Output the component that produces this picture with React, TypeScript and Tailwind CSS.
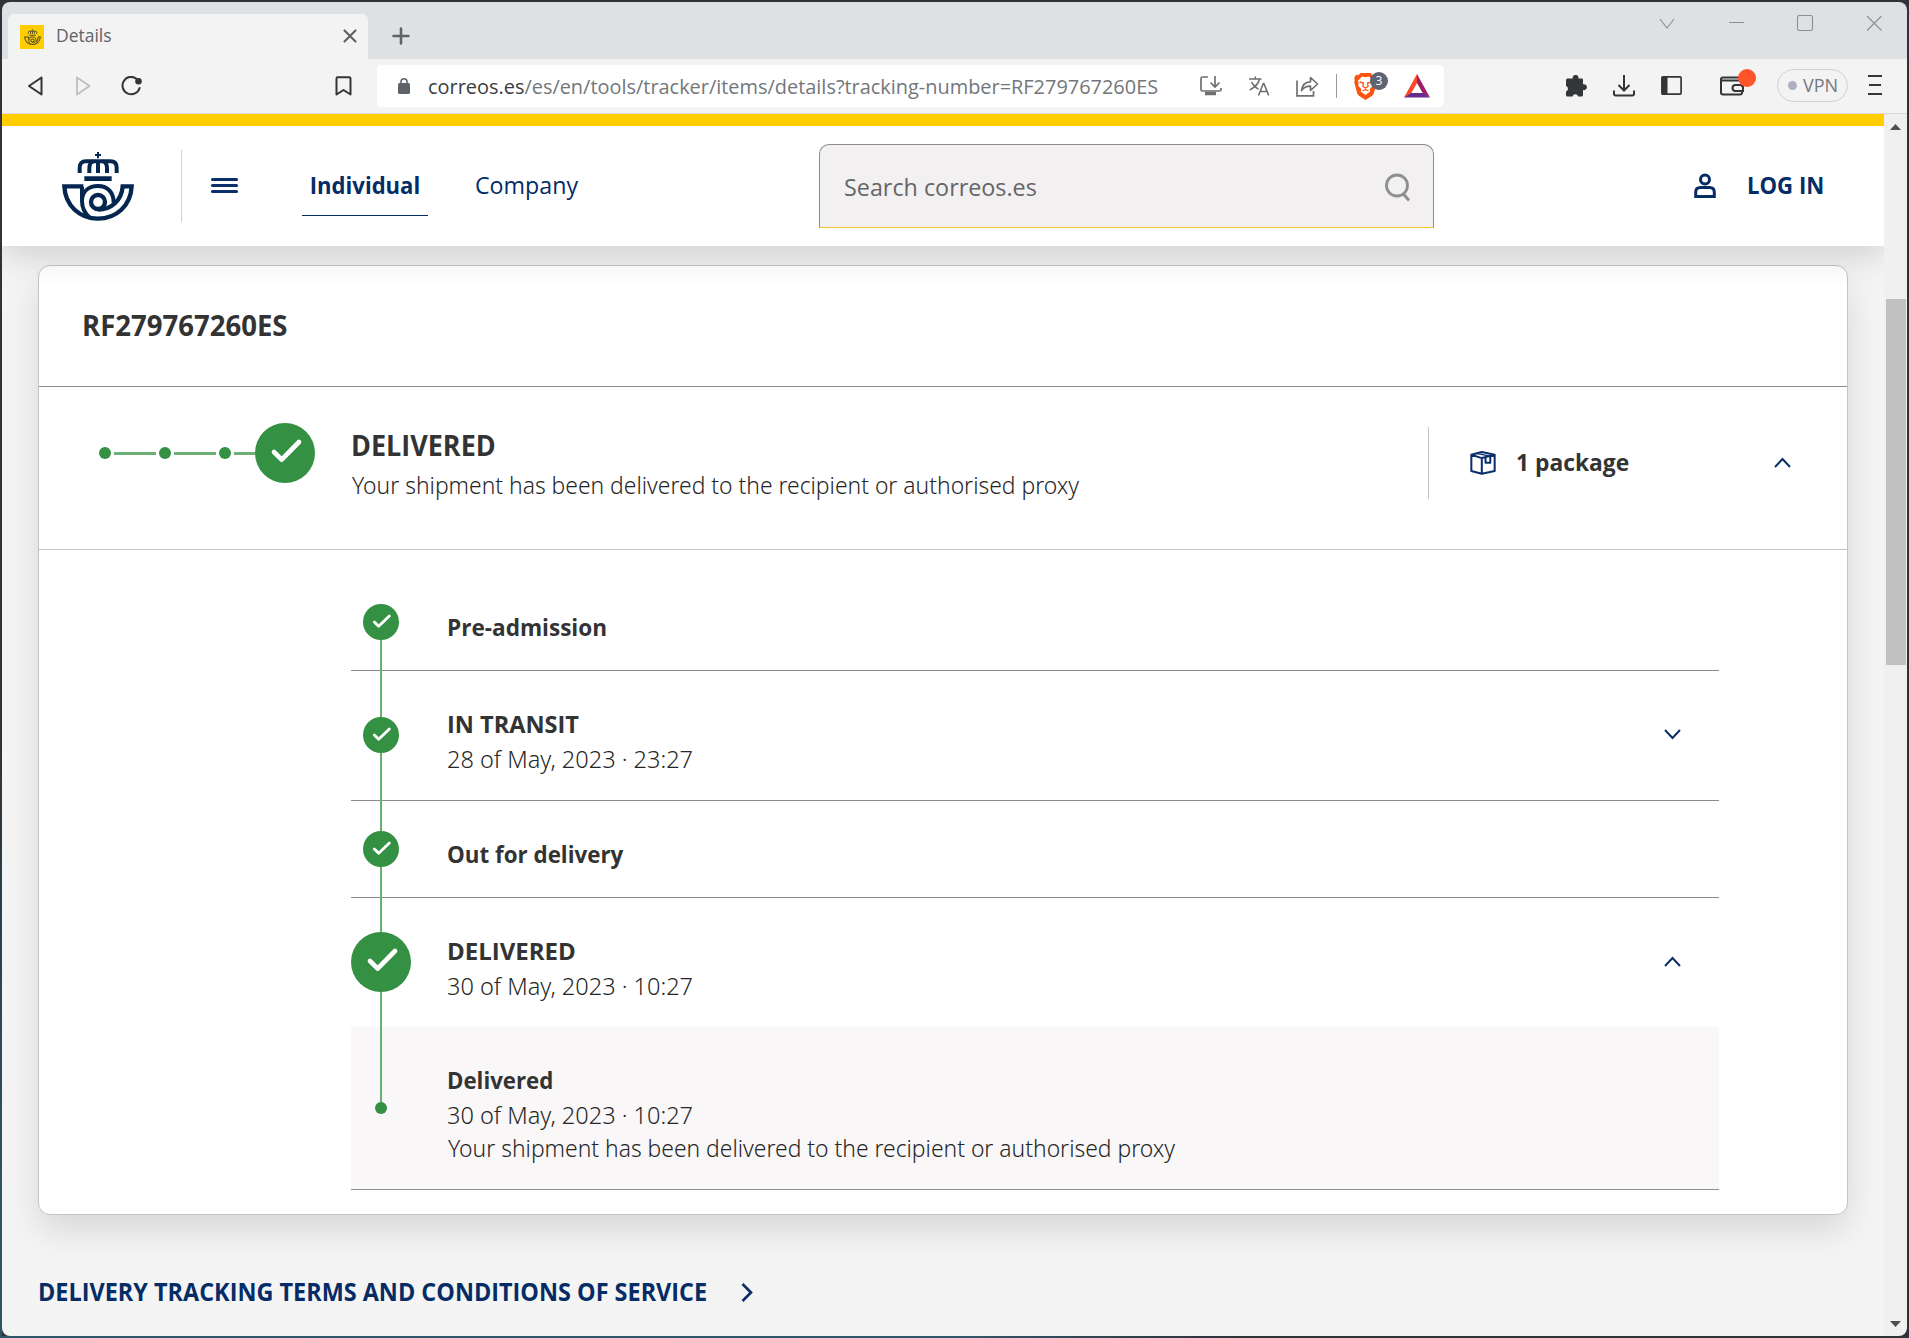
import type { ReactNode } from "react";

function CorreosLogo({ className }: { className?: string }) {
  return (
    <svg viewBox="186 456 216 207" className={className} fill="none" stroke="currentColor">
      <path d="M294 456v19M285 465h18" strokeWidth="6" />
      <path d="M239 519v-16c0-12 7-19 18-19h74c12 0 19 7 19 19v16" strokeWidth="12" />
      <path d="M268 519v-14c0-12 4-19 12-21M294 519v-36M321 519v-14c0-12-4-19-12-21" strokeWidth="12" />
      <path d="M253 536h82" strokeWidth="14" />
      <path d="M250 559h-57c3 58 46 97 101 97s98-39 101-97h-27c-3 42-34 70-74 70" strokeWidth="13" />
      <path d="M246 560v44c0 20 10 38 24 50M246 600c2-26 20-42 48-42 30 0 47 20 47 50" strokeWidth="12" />
      <circle cx="294" cy="606" r="21" strokeWidth="13" />
    </svg>
  );
}

function BigCheck({ className = "" }: { className?: string }) {
  return (
    <svg viewBox="0 0 180 180" className={`size-[60px] shrink-0 ${className}`}>
      <circle cx="90" cy="90" r="90" fill="#349042" />
      <path d="M57 87l23 23 52-53" fill="none" stroke="#fff" strokeWidth="14" strokeLinecap="round" strokeLinejoin="round" />
    </svg>
  );
}

function SmallCheck() {
  return (
    <svg viewBox="0 0 108 108" className="size-9 shrink-0">
      <circle cx="54" cy="54" r="54" fill="#349042" />
      <path d="M34 54l13 13 32-31" fill="none" stroke="#fff" strokeWidth="8.500" strokeLinecap="round" strokeLinejoin="round" />
    </svg>
  );
}

function Chevron({ dir, className = "" }: { dir: "up" | "down"; className?: string }) {
  return (
    <svg viewBox="0 0 17 11" className={`h-[11px] w-[17px] ${className}`} fill="none" stroke="#0a2f6b" strokeWidth="2">
      <path d={dir === "up" ? "M1 10l7.500-8 7.500 8" : "M1 1l7.500 8 7.500-8"} />
    </svg>
  );
}

function TabStrip() {
  return (
    <div className="flex h-[57px] bg-[#dee1e4] pl-1.5">
      <div className="mt-3 flex h-[45px] w-[360px] items-center rounded-t-md bg-[#f3f3f3] pr-3 pl-3">
        <span className="flex size-6 items-center justify-center bg-[#ffcd00] text-[#4d4a2c]">
          <CorreosLogo className="h-4 w-[17px]" />
        </span>
        <span className="mb-[3px] ml-3 origin-left scale-x-[0.97] text-[18px] leading-6 text-[#5f6368]">Details</span>
        <svg viewBox="0 0 12 12" className="mb-px ml-auto size-3 overflow-visible" stroke="#5f6368" strokeWidth="2.2" strokeLinecap="round">
          <path d="M.5.500l11 11M11.500.500l-11 11" />
        </svg>
      </div>
      <svg viewBox="0 0 18 18" className="mt-[25px] ml-6 size-[18px]" stroke="#5f6368" strokeWidth="2.600" strokeLinecap="round">
        <path d="M9 1.500v15M1.500 9h15" />
      </svg>
      <div className="ml-auto flex pt-[13px] pr-6">
        <svg viewBox="0 0 224 16" className="h-4 w-[224px]" fill="none" stroke="#8b8f93" strokeWidth="1.100">
          <path d="M1 4l7 9 7-9M70 7.500h15" />
          <rect x="138.500" y=".5" width="15" height="15" rx="2" />
          <path d="M208 1l14.500 14.500M222.500 1L208 15.500" />
        </svg>
      </div>
    </div>
  );
}

function AddressBar() {
  return (
    <div className="ml-[25px] flex h-[42px] w-[1067px] items-center rounded-[5px] bg-white">
      <svg viewBox="0 0 12 16" className="ml-[21px] h-4 w-3">
        <rect y="5" width="12" height="11" rx="1.500" fill="#5f6368" />
        <path d="M3 6V3.800a3 3 0 0 1 6 0V6" fill="none" stroke="#5f6368" strokeWidth="1.500" />
      </svg>
      <span className="mt-0.5 ml-[18px] w-[772px] origin-left scale-x-[0.996] text-[20px] leading-7 whitespace-nowrap text-[#73777b]">
        <span className="text-[#3a3c3f]">correos.es</span>/es/en/tools/tracker/items/details?tracking-number=RF279767260ES
      </span>
      <svg viewBox="0 0 22 20" className="h-5 w-[22px]" fill="none" stroke="#6f6f6f" strokeWidth="1.700">
        <path d="M8 1H2.500Q1 1 1 2.500v11Q1 15 2.500 15h17q1.500 0 1.500-1.500V12M15 0v10M10.500 6.500L15 11l4.500-4.500" />
        <path d="M5 17.500h11" strokeWidth="3.500" />
      </svg>
      <svg viewBox="0 0 20 20" className="ml-[27px] size-5" fill="none" stroke="#6f6f6f" strokeWidth="1.600">
        <path d="M0 3h12.500M6.300.500V3M2.500 6c1.500 3.200 4.200 5.600 7 7.200M10.500 3C9.500 7.500 6 11.200.800 14" />
        <path d="M9.500 19.500l4.800-12h.6l4.800 12M11.300 15.500h6.600" />
      </svg>
      <svg viewBox="0 0 23 21" className="ml-[27px] h-[21px] w-[23px]" fill="none" stroke="#6f6f6f" strokeWidth="1.700">
        <path d="M1 4.500V19.800h16.500V15" />
        <path d="M5.500 14.500C6 8.500 9.500 6 14.500 5.800V1.500l7 6.500-7 6.500v-4.300c-4-.2-6.500 1-9 4.300z" strokeLinejoin="round" />
      </svg>
      <span className="ml-[17px] h-6 w-px bg-[#9a9a9a]" />
      <div className="relative ml-[17px] flex">
        <svg viewBox="0 0 23 27" className="h-[27px] w-[23px]">
          <path d="M6.500 0h10l2.200 2.200 2.300-.4 1.800 3-.6 2.200.6 2.300-3 11.200-2 2.600L11.500 27l-6.300-3.900-2-2.600-3-11.200.6-2.300-.6-2.200 1.800-3 2.300.4z" fill="#fb5410" />
          <path d="M11.500 4.200L8 3.600 3.800 8l1 2.500-.8 2 3.400 3.700-.7 2.200 4.800 3.500 4.800-3.500-.7-2.200 3.400-3.700-.8-2 1-2.500L15 3.600z" fill="#fff" />
          <path d="M5.500 9l4 1-.6 3.500 2.600 1.500 2.600-1.500-.6-3.500 4-1M8.500 18l3-1.500 3 1.500" fill="none" stroke="#fb5410" strokeWidth="1.300" />
        </svg>
        <span className="absolute -top-px left-4 flex size-[18px] items-center justify-center rounded-full bg-[#5f6270] text-[12px] leading-none text-white">3</span>
      </div>
      <svg viewBox="0 0 26 24" className="ml-[27px] h-6 w-[26px]">
        <path d="M13 0L0 23.500l7-4L13 9z" fill="#ff4724" />
        <path d="M13 0l13 23.500-7-4L13 9z" fill="#9e1f63" />
        <path d="M0 23.500h26l-7-4.500H7z" fill="#662d91" />
      </svg>
    </div>
  );
}

function Toolbar() {
  return (
    <div className="flex h-[55px] items-center border-b border-[#d9d9d9] bg-[#f3f3f3] pl-[25px]">
      <svg viewBox="0 0 16 20" className="h-5 w-4" fill="none" stroke="#333537" strokeWidth="2" strokeLinejoin="round">
        <path d="M14.500 1.500v17L2 10z" />
      </svg>
      <svg viewBox="0 0 16 20" className="ml-8 h-5 w-4" fill="none" stroke="#bdbebf" strokeWidth="1.800" strokeLinejoin="round">
        <path d="M2 1.500v17L14.500 10z" />
      </svg>
      <svg viewBox="0 0 22 20" className="ml-[30px] h-5 w-[22px]" fill="none" stroke="#333537" strokeWidth="2">
        <path d="M15.500 2.700A8.700 8.700 0 1 0 18.600 12" strokeLinecap="round" />
        <circle cx="17.500" cy="5.300" r="3.300" fill="#333537" stroke="none" />
      </svg>
      <svg viewBox="0 0 17 20" className="ml-[192px] h-5 w-[17px]" fill="none" stroke="#333537" strokeWidth="2" strokeLinejoin="round">
        <path d="M1.500 2.500q0-1.300 1.300-1.300h11.400q1.300 0 1.300 1.300v16L8.500 14l-7 4.500z" />
      </svg>
      <AddressBar />
      <svg viewBox="0 0 22 22" className="mb-px ml-[121px] size-[22px]" fill="#333537">
        <path d="M5.500 3.500h2.300a2.900 2.900 0 1 1 5.600 0h3.200q1.400 0 1.400 1.400V9.300a3 3 0 1 1 0 5.700v5q0 1.500-1.500 1.500h-3.400a2.800 2.800 0 0 0-5.500 0H2.500Q1 21.500 1 20v-3.500a2.900 2.900 0 0 0 0-5.500V5q0-1.500 1.500-1.500z" />
      </svg>
      <svg viewBox="0 0 22 22" className="mb-px ml-[26px] size-[22px]" fill="none" stroke="#333537" strokeWidth="2">
        <path d="M11 0v15M5.500 10l5.500 5.500 5.500-5.500M1 15.500v3.300q0 1.700 1.700 1.700h16.600q1.700 0 1.700-1.700v-3.300" />
      </svg>
      <svg viewBox="0 0 21 19" className="mb-px ml-[26px] h-[19px] w-[21px]" fill="none" stroke="#333537" strokeWidth="1.700">
        <rect x=".9" y=".9" width="19.200" height="17.200" rx="1" />
        <path d="M1 1h5.500v17H1z" fill="#333537" stroke="none" />
      </svg>
      <div className="relative ml-[38px] flex">
        <svg viewBox="0 0 24 20" className="h-5 w-6" fill="none" stroke="#333537" strokeWidth="2">
          <path d="M22 11V3.500Q22 1.500 20 1.500H3Q1 1.500 1 3.500v13q0 2 2 2h17q2 0 2-2V14.500M1 4.500h20" />
          <path d="M23 9h-7.500a3 3 0 0 0 0 6H23z" />
        </svg>
        <span className="absolute -top-[7px] left-[18px] size-[18px] rounded-full bg-[#ff5429]" />
      </div>
      <span className="mb-0.5 ml-[33px] flex h-[33px] w-[71px] items-center rounded-full border border-[#cfd0d3] pl-2.5 text-[18px] leading-6 text-[#75787c]">
        <span className="mr-1.5 size-[9px] rounded-full bg-[#afafc3]" />
        VPN
      </span>
      <span className="mb-0.5 ml-5 flex h-5 w-3.5 flex-col justify-between">
        <span className="h-0.5 w-3.5 bg-[#333537]" />
        <span className="ml-px h-0.5 w-3 bg-[#333537]" />
        <span className="h-0.5 w-3.5 bg-[#333537]" />
      </span>
    </div>
  );
}

function SiteHeader() {
  return (
    <header className="relative z-10 border-t-12 border-[#ffcd00] bg-white shadow-[0_8px_32px_rgba(0,0,0,0.16)]">
      <div className="flex h-30 items-center pl-15 text-[24px] leading-8 text-[#062c66]">
        <CorreosLogo className="h-[69px] w-[72px] text-[#04264f]" />
        <span className="ml-[47px] h-[72px] w-px bg-[#d0d0d0]" />
        <span className="mb-px ml-[29px] flex w-[27px] flex-col gap-[3px]">
          <span className="h-[3px] rounded bg-[#0a2f6b]" />
          <span className="h-[3px] rounded bg-[#0a2f6b]" />
          <span className="h-[3px] rounded bg-[#0a2f6b]" />
        </span>
        <nav className="ml-16 flex self-stretch pt-[43px]">
          <span className="flex h-[47px] w-[126px] justify-center border-b border-[#062c66] font-bold">
            <span className="scale-x-[0.92]">Individual</span>
          </span>
          <span className="ml-[47px] w-[110px] origin-left scale-x-[0.967]">Company</span>
        </nav>
        <div className="ml-[234px] flex h-[84px] w-[615px] items-center justify-between rounded-t-[10px] border border-[#8c8c8c] border-b-[#f0c52c] bg-[#f2f0f1] pr-[22px] pl-6 text-[#666]">
          <span className="mt-px origin-left scale-x-[0.972]">Search correos.es</span>
          <svg viewBox="0 0 26 29" className="mt-0.5 h-[29px] w-[26px]" fill="none" stroke="#8f8f8f" strokeWidth="2.800">
            <circle cx="12" cy="12.500" r="10.500" />
            <path d="M18.500 21l5.500 6.500" />
          </svg>
        </div>
        <svg viewBox="0 0 22 26" className="ml-[260px] h-[26px] w-[22px]" fill="none" stroke="#062c66" strokeWidth="3">
          <circle cx="11" cy="6.500" r="4.500" />
          <path d="M6.500 14.500h9q4.800 0 4.800 4.800v4.200H1.700v-4.200q0-4.800 4.800-4.800z" />
        </svg>
        <span className="mb-[3px] ml-[31px] origin-left scale-x-[0.922] font-bold whitespace-nowrap">LOG IN</span>
      </div>
    </header>
  );
}

const dots = [
  { id: "first", line: "w-[42px]" },
  { id: "second", line: "w-[42px]" },
  { id: "third", line: "w-[21px]" },
];

function StatusSummary() {
  return (
    <div className="flex h-[163px] border-b border-[#c4c4c4] pl-15">
      <div className="mt-9 flex h-[60px] items-center">
        {dots.map((dot) => (
          <span key={dot.id} className="flex items-center">
            <span className="size-3 rounded-full bg-[#349042]" />
            <span className={`mx-[3px] h-[3px] bg-[#6bb074] ${dot.line}`} />
          </span>
        ))}
        <BigCheck className="-ml-[3px]" />
      </div>
      <div className="mt-[39px] ml-9 w-[1077px] whitespace-nowrap">
        <p className="origin-left scale-x-[0.963] text-[28px] leading-[38px] font-bold">DELIVERED</p>
        <p className="ml-px origin-left scale-x-[0.953] font-['Noto_Sans',sans-serif] text-[24px] leading-[42px] font-light text-[#262626]">
          Your shipment has been delivered to the recipient or authorised proxy
        </p>
      </div>
      <div className="mt-10 flex h-[72px] w-[363px] items-center border-l border-[#c4c4c4] pl-[41px]">
        <svg viewBox="270 185 75 71" className="h-6 w-[26px]" fill="none" stroke="#0a2f6b" strokeWidth="6" strokeLinejoin="round">
          <path d="M273 196l31-8 38 8v48l-38 8-31-8zM273 196l31 10 38-10M304 206v46" />
          <path d="M288 192l40 8" strokeWidth="4" />
          <path d="M315 204v16h14v-18" />
        </svg>
        <span className="mb-0.5 ml-5 origin-left scale-x-[0.95] text-[24px] leading-8 font-bold whitespace-nowrap">1 package</span>
        <Chevron dir="up" className="mb-0.5 ml-auto" />
      </div>
    </div>
  );
}

type StepProps = {
  title: string;
  className: string;
  titleClass?: string;
  date?: string;
  marker: ReactNode;
  toggle?: "up" | "down";
};

function Step({ title, date, marker, toggle, className, titleClass = "" }: StepProps) {
  return (
    <li className={`flex ${className}`}>
      <span className="relative z-[1] flex w-[60px] justify-center">{marker}</span>
      <div className="mt-[35px] ml-9 grow leading-[35px]">
        <p className={`origin-left font-bold ${titleClass}`}>{title}</p>
        {date && <p className="origin-left scale-x-[0.98] font-['Noto_Sans',sans-serif] font-light text-[#262626]">{date}</p>}
      </div>
      {toggle && <Chevron dir={toggle} className="mt-[58px] mr-[38px]" />}
    </li>
  );
}

function Timeline() {
  return (
    <ol className="relative ml-[312px] w-[1368px] pt-6 text-[24px]">
      <span className="absolute top-[90px] left-[29px] h-[468px] w-0.5 bg-[#66b070]" />
      <Step title="Pre-admission" titleClass="scale-x-[0.94]" className="h-[97px] border-b border-[#8c8c8c]" marker={<span className="mt-[30px]"><SmallCheck /></span>} />
      <Step title="IN TRANSIT" titleClass="scale-x-[0.98]" date="28 of May, 2023 · 23:27" toggle="down" className="h-[130px] border-b border-[#8c8c8c]" marker={<span className="mt-[46px]"><SmallCheck /></span>} />
      <Step title="Out for delivery" titleClass="scale-x-[0.932]" className="h-[97px] border-b border-[#8c8c8c]" marker={<span className="mt-[30px]"><SmallCheck /></span>} />
      <Step title="DELIVERED" date="30 of May, 2023 · 10:27" toggle="up" className="h-[129px]" marker={<span className="mt-[34px]"><BigCheck /></span>} />
      <li className="flex h-[163px] border-b border-[#8c8c8c] bg-[#f9f7f8]">
        <span className="relative z-[1] flex w-[60px] justify-center">
          <span className="mt-[75px] size-3 rounded-full bg-[#349042]" />
        </span>
        <span className="absolute top-[477px] left-[29px] h-[78px] w-0.5 bg-[#66b070]" />
        <div className="mt-[35px] ml-9 font-['Noto_Sans',sans-serif] leading-[35px] font-light whitespace-nowrap text-[#262626]">
          <p className="origin-left scale-x-[0.927] font-['Open_Sans',sans-serif] font-bold text-[#333]">Delivered</p>
          <p className="origin-left scale-x-[0.98]">30 of May, 2023 · 10:27</p>
          <p className="ml-px origin-left scale-x-[0.953] leading-8">Your shipment has been delivered to the recipient or authorised proxy</p>
        </div>
      </li>
    </ol>
  );
}

function Scrollbar() {
  return (
    <div className="flex w-[23px] flex-col items-center bg-[#f0f0f0]">
      <svg viewBox="0 0 11 6" className="mt-2.5 h-1.5 w-[11px]" fill="#505050">
        <path d="M5.500 0L11 6H0z" />
      </svg>
      <span className="mt-[169px] h-[366px] w-5 bg-[#c1c1c1]" />
      <svg viewBox="0 0 11 6" className="mt-auto mb-[9px] h-1.5 w-[11px]" fill="#505050">
        <path d="M5.500 6L11 0H0z" />
      </svg>
    </div>
  );
}

export default function App() {
  return (
    <div className="h-[1338px] w-[1909px] overflow-hidden bg-[linear-gradient(90deg,#2d5568,#31566a_50%,#2f3237_65%,#2f3237)] font-['Open_Sans','Noto_Sans',sans-serif]">
      <div className="h-[1336px] bg-[linear-gradient(180deg,#2f3237_55%,#2d5568_90%)] pt-0.5 pl-0.5">
        <div className="h-[1334px] w-[1907px] bg-[#2f3237]">
          <div className="flex h-[1334px] w-[1905px] flex-col overflow-hidden rounded-lg">
            <TabStrip />
            <Toolbar />
            <div className="flex min-h-0 grow">
              <div className="min-w-0 grow overflow-hidden bg-[#f4f4f4] text-[#333]">
                <SiteHeader />
                <main className="pl-9">
                  <section className="mt-[19px] h-[950px] w-[1810px] rounded-xl border border-[#c4c4c4] bg-white shadow-[0_16px_36px_-2px_rgba(0,0,0,0.13)]">
                    <h1 className="h-[121px] border-b border-[#8c8c8c] pt-10 pl-[43px] text-[28px] leading-[38px] font-bold">
                      <span className="inline-block origin-left scale-x-[0.983]">RF279767260ES</span>
                    </h1>
                    <StatusSummary />
                    <Timeline />
                  </section>
                  <div className="mt-[60px] flex items-center text-[25px] leading-8 font-bold text-[#062c66]">
                    <span className="origin-left scale-x-[0.937] whitespace-nowrap">DELIVERY TRACKING TERMS AND CONDITIONS OF SERVICE</span>
                    <svg viewBox="0 0 12 19" className="mt-0.5 -ml-[11px] h-[19px] w-3" fill="none" stroke="#062c66" strokeWidth="2.600">
                      <path d="M1.500 1l8.500 8.500L1.500 18" />
                    </svg>
                  </div>
                </main>
              </div>
              <Scrollbar />
            </div>
          </div>
        </div>
      </div>
    </div>
  );
}
